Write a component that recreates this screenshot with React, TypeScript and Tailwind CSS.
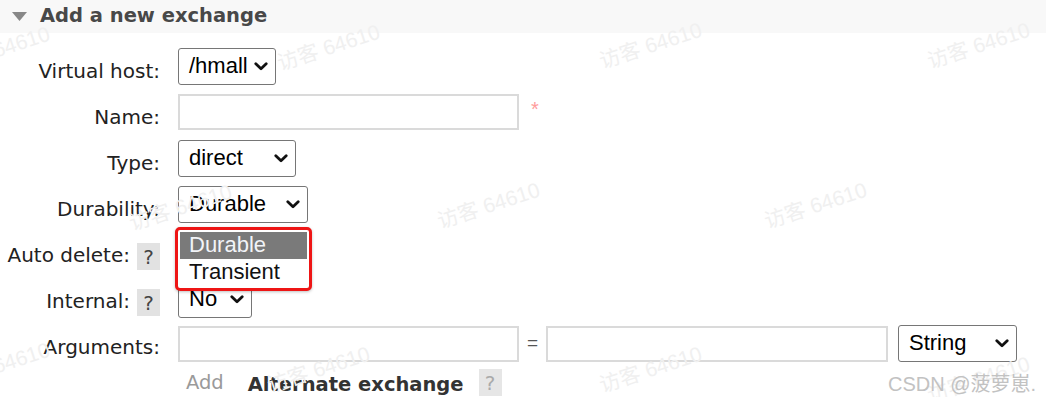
import React from "react";

const Chevron = () => (
  <svg width="14" height="9" viewBox="0 0 14 9" className="shrink-0">
    <path d="M1.8 1.8 L7 6.8 L12.2 1.8" fill="none" stroke="#111" strokeWidth="2.8" strokeLinecap="round" strokeLinejoin="round" />
  </svg>
);

const Select = ({ value, w }: { value: string; w: string }) => (
  <div
    className={`${w} h-[37px] bg-white border border-[#767676] rounded-[3px] pl-[10px] pr-[7px] flex items-center justify-between font-['Liberation_Sans'] text-[22px] text-black leading-none`}
  >
    <span className="-mt-[2px]">{value}</span>
    <Chevron />
  </div>
);

const Input = ({ w }: { w: string }) => (
  <div className={`${w} h-[36px] bg-white border-2 border-[#dadada]`} />
);

const Help = () => (
  <span className="inline-flex w-[23px] h-[27px] bg-[#e2e2e2] items-center justify-center text-[20px] text-[#444] leading-none">?</span>
);

const Row = ({ label, help, children }: { label: string; help?: boolean; children: React.ReactNode }) => (
  <div className="flex h-[46px] items-start">
    <div className="w-[160px] shrink-0 flex justify-end items-start">
      <span className="pt-[11px] leading-[24px] text-[20px] text-[#222] whitespace-nowrap">{label}</span>
      {help && (
        <span className="ml-[7px] mt-[11px]">
          <Help />
        </span>
      )}
    </div>
    <div className="ml-[18px] flex items-center">{children}</div>
  </div>
);

const marks: { l: number; t: number }[] = [
  { l: -52, t: 50 },
  { l: 278, t: 48 },
  { l: 600, t: 46 },
  { l: 928, t: 46 },
  { l: 130, t: 208 },
  { l: 438, t: 206 },
  { l: 765, t: 206 },
  { l: -52, t: 366 },
  { l: 268, t: 370 },
  { l: 600, t: 370 },
  { l: 928, t: 380 },
];

export default function App() {
  return (
    <div className="relative w-[1046px] h-[397px] overflow-hidden bg-white font-['DejaVu_Sans',sans-serif]">
      {/* header */}
      <div className="h-[33px] bg-[#f8f8f8] flex items-center pl-[12px]">
        <svg width="15" height="9" viewBox="0 0 15 9">
          <path d="M0 0 L15 0 L7.5 9 Z" fill="#888" />
        </svg>
        <span className="ml-[13px] text-[19.5px] font-bold text-[#484848] leading-none -mt-[2px]">Add a new exchange</span>
      </div>

      {/* form */}
      <div className="pt-[15px] flex flex-col">
        <Row label="Virtual host:">
          <Select value="/hmall" w="w-[98px]" />
        </Row>
        <Row label="Name:">
          <Input w="w-[341px]" />
          <span className="ml-[12px] text-[20px] text-[#ff9c9c] font-['Liberation_Sans'] -mt-[6px]">*</span>
        </Row>
        <Row label="Type:">
          <Select value="direct" w="w-[118px]" />
        </Row>
        <Row label="Durability:">
          <Select value="Durable" w="w-[130px]" />
        </Row>
        <Row label="Auto delete:" help>
          <Select value="No" w="w-[74px]" />
        </Row>
        <Row label="Internal:" help>
          <div className="mt-[3px]">
            <Select value="No" w="w-[74px]" />
          </div>
        </Row>
        <Row label="Arguments:">
          <div className="mt-[1px] flex items-center">
            <Input w="w-[341px]" />
            <span className="w-[27px] text-center text-[19px] text-[#555] font-['Liberation_Sans']">=</span>
            <Input w="w-[342px]" />
            <div className="ml-[10px]">
              <Select value="String" w="w-[119px]" />
            </div>
          </div>
        </Row>
        <div className="flex items-center h-[30px] -mt-[2px]">
          <span className="ml-[186px] text-[19.5px] text-[#9a9a9a]">Add</span>
          <span className="ml-[24px] text-[19.5px] font-bold text-[#333] mt-[3px]">Alternate exchange</span>
          <span className="ml-[15px]">
            <span className="inline-flex w-[23px] h-[27px] bg-[#e6e6e6] items-center justify-center text-[20px] text-[#aaa] leading-none">?</span>
          </span>
        </div>
      </div>

      {/* dropdown (open list with red annotation frame) */}
      <div className="absolute left-[175px] top-[227px] w-[137px] h-[64px] bg-white border-[3px] border-[#ee1515] rounded-[5px] p-[2px] shadow-[0_1px_3px_rgba(0,0,0,0.25)] font-['Liberation_Sans'] text-[22px] leading-none">
        <div className="h-[27px] bg-[#7a7a7a] text-[#f2f4f8] pl-[9px] flex items-center">
          <span className="-mt-[1px]">Durable</span>
        </div>
        <div className="h-[26px] text-[#111] pl-[9px] flex items-center">
          <span className="-mt-[1px]">Transient</span>
        </div>
      </div>

      {/* watermarks */}
      {marks.map((m, i) => (
        <div
          key={i}
          className="absolute pointer-events-none whitespace-nowrap text-[21px] text-[#f0f0f0] font-['Liberation_Sans','Noto_Sans_CJK_SC',sans-serif] rotate-[-18deg] origin-left"
          style={{ left: m.l, top: m.t }}
        >
          访客 64610
        </div>
      ))}

      {/* CSDN credit */}
      <div className="absolute left-[888px] top-[369px] whitespace-nowrap text-[20px] text-[#c2c2c2] font-['Liberation_Sans','Noto_Sans_CJK_SC',sans-serif]">
        CSDN @菠萝崽.
      </div>
    </div>
  );
}
